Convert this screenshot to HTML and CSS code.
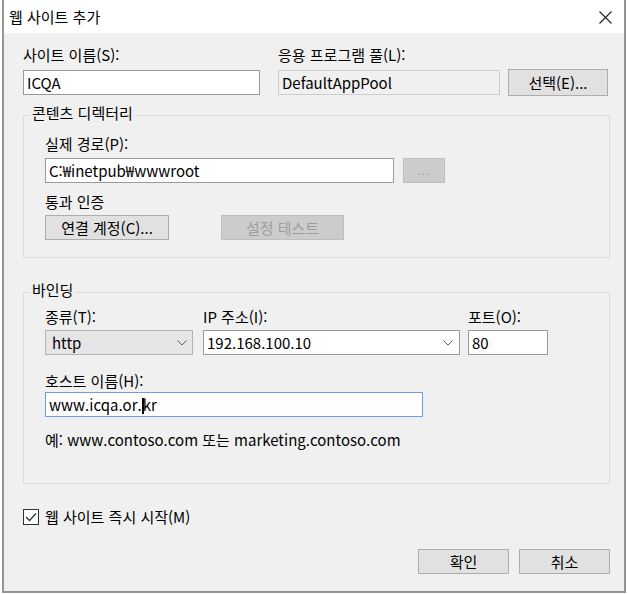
FILE: index.html
```html
<!DOCTYPE html>
<html lang="ko">

<head>
    <meta charset="UTF-8">
    <title>웹 사이트 추가</title>
    <link rel="stylesheet" href="styles.css">
</head>

<body>
    <div class="dialog">
        <div class="titlebar">
            <span class="title">웹 사이트 추가</span>
            <svg class="close-icon" width="13" height="13" viewBox="0 0 13 13">
                <path d="M0.5 0.5 L12.5 12.5 M12.5 0.5 L0.5 12.5" stroke="#222" stroke-width="1.1" fill="none" />
            </svg>
        </div>

        <div class="dialog-body">
            <!-- 사이트 이름 / 응용 프로그램 풀 -->
            <div class="site-row">
                <div class="field site-name">
                    <div class="label">사이트 이름(S):</div>
                    <div class="textbox">ICQA</div>
                </div>
                <div class="field app-pool">
                    <div class="label">응용 프로그램 풀(L):</div>
                    <div class="textbox readonly">DefaultAppPool</div>
                </div>
                <button class="btn select-btn">선택(E)...</button>
            </div>

            <!-- 콘텐츠 디렉터리 -->
            <div class="group content-dir">
                <div class="group-title">콘텐츠 디렉터리</div>
                <div class="label path-label">실제 경로(P):</div>
                <div class="path-row">
                    <div class="textbox path-box">C:₩inetpub₩wwwroot</div>
                    <button class="btn disabled browse-btn">...</button>
                </div>
                <div class="label auth-label">통과 인증</div>
                <div class="auth-row">
                    <button class="btn connect-btn">연결 계정(C)...</button>
                    <button class="btn disabled test-btn">설정 테스트</button>
                </div>
            </div>

            <!-- 바인딩 -->
            <div class="group binding">
                <div class="group-title">바인딩</div>
                <div class="bind-row">
                    <div class="field type-col">
                        <div class="label">종류(T):</div>
                        <div class="combo readonly">
                            <span>http</span>
                            <svg class="chevron" width="10" height="6" viewBox="0 0 10 6">
                                <path d="M0.5 0.5 L5 5 L9.5 0.5" stroke="#606060" stroke-width="1" fill="none" />
                            </svg>
                        </div>
                    </div>
                    <div class="field ip-col">
                        <div class="label">IP 주소(I):</div>
                        <div class="combo">
                            <span>192.168.100.10</span>
                            <svg class="chevron" width="10" height="6" viewBox="0 0 10 6">
                                <path d="M0.5 0.5 L5 5 L9.5 0.5" stroke="#606060" stroke-width="1" fill="none" />
                            </svg>
                        </div>
                    </div>
                    <div class="field port-col">
                        <div class="label">포트(O):</div>
                        <div class="textbox">80</div>
                    </div>
                </div>
                <div class="label host-label">호스트 이름(H):</div>
                <div class="textbox focused host-box">www.icqa.or.<span class="caret"></span>kr</div>
                <div class="example">예: www.contoso.com 또는 marketing.contoso.com</div>
            </div>

            <label class="start-check">
                <span class="checkbox">
                    <svg width="12" height="10" viewBox="0 0 12 10">
                        <path d="M1 5 L4.5 8.5 L11 1.5" stroke="#333" stroke-width="1.3" fill="none" />
                    </svg>
                </span>
                웹 사이트 즉시 시작(M)
            </label>

            <div class="footer">
                <button class="btn ok-btn">확인</button>
                <button class="btn cancel-btn">취소</button>
            </div>
        </div>
    </div>
</body>

</html>
```

FILE: styles.css
```css
* {
    box-sizing: border-box;
}

body {
    margin: 0;
    background-color: white;
    font-family: "Noto Sans CJK KR", sans-serif;
    font-size: 15px;
    line-height: 20px;
    color: #000;
}

.dialog {
    margin-left: 2px;
    width: 624px;
    height: 593px;
    border: 2px solid #949494;
    border-top: none;
    background-color: #f0f0f0;
}

.titlebar {
    height: 33px;
    background-color: white;
    display: flex;
    align-items: center;
    justify-content: space-between;
    padding: 1px 12px 0 5px;
}

.close-icon {
    margin-top: 1px;
}

.dialog-body {
    padding: 12px 14px 0 19px;
}

.label {
    line-height: 20px;
    white-space: nowrap;
}

.field .label {
    margin-bottom: 5px;
}

.textbox {
    height: 25px;
    border: 1px solid #9a9a9a;
    background-color: white;
    padding: 0 3px;
    line-height: 23px;
    white-space: nowrap;
    overflow: hidden;
}

.textbox.readonly {
    background-color: #f0f0f0;
    border-color: #cdcdcd;
}

.textbox.focused {
    border-color: #6a9fe4;
}

.caret {
    display: inline-block;
    width: 2px;
    height: 16px;
    background-color: #000;
    vertical-align: -3px;
    margin-right: -1px;
}

.btn {
    font: inherit;
    height: 25px;
    padding: 0;
    border: 1px solid #adadad;
    background-color: #e1e1e1;
    color: #000;
    line-height: 23px;
    cursor: pointer;
}

.btn.disabled {
    background-color: #cccccc;
    border-color: #bfbfbf;
    color: #9d9d9d;
    cursor: default;
}

/* 첫 줄 */
.site-row {
    display: flex;
    align-items: flex-end;
}

.site-name {
    width: 237px;
    margin-right: 18px;
}

.app-pool {
    width: 222px;
    margin-right: 8px;
}

.select-btn {
    width: 100px;
    height: 27px;
    margin-bottom: -1px;
}

/* 그룹 상자 */
.group {
    width: 587px;
    border: 1px solid #dcdcdc;
    padding: 0 0 17px 21px;
}

.group-title {
    width: max-content;
    margin: -13px 0 0 -15px;
    padding: 0 2px;
    background-color: #f0f0f0;
    line-height: 20px;
}

.content-dir {
    margin-top: 20px;
}

.path-label {
    margin-top: 11px;
    margin-bottom: 4px;
}

.path-row {
    display: flex;
}

.path-box {
    width: 349px;
    margin-right: 9px;
}

.browse-btn {
    width: 42px;
    font-size: 11px;
    letter-spacing: 1px;
}

.auth-label {
    margin-top: 9px;
    margin-bottom: 3px;
}

.auth-row {
    display: flex;
}

.connect-btn {
    width: 124px;
    margin-right: 52px;
}

.test-btn {
    width: 123px;
}

.binding {
    margin-top: 34px;
    padding-bottom: 33px;
}

.bind-row {
    display: flex;
    margin-top: 7px;
}

.bind-row .label {
    margin-bottom: 3px;
}

.type-col {
    width: 148px;
    margin-right: 10px;
}

.ip-col {
    width: 257px;
    margin-right: 8px;
}

.port-col {
    width: 80px;
}

.combo {
    height: 25px;
    border: 1px solid #9a9a9a;
    background-color: white;
    display: flex;
    align-items: center;
    justify-content: space-between;
    padding: 0 6px 0 3px;
    line-height: 23px;
}

.combo.readonly {
    background-color: #e5e5e5;
    border-color: #b4b4b4;
    padding-left: 6px;
    padding-right: 5px;
}

.host-label {
    margin-top: 16px;
    margin-bottom: 1px;
}

.host-box {
    width: 378px;
}

.example {
    margin-top: 13px;
}

/* 체크박스 */
.start-check {
    display: flex;
    align-items: center;
    margin-top: 23px;
    line-height: 20px;
}

.checkbox {
    width: 16px;
    height: 16px;
    border: 1px solid #333;
    background-color: white;
    display: flex;
    align-items: center;
    justify-content: center;
    margin-right: 6px;
}

.footer {
    display: flex;
    justify-content: flex-end;
    margin-top: 22px;
}

.ok-btn,
.cancel-btn {
    width: 91px;
}

.ok-btn {
    margin-right: 10px;
}
```
